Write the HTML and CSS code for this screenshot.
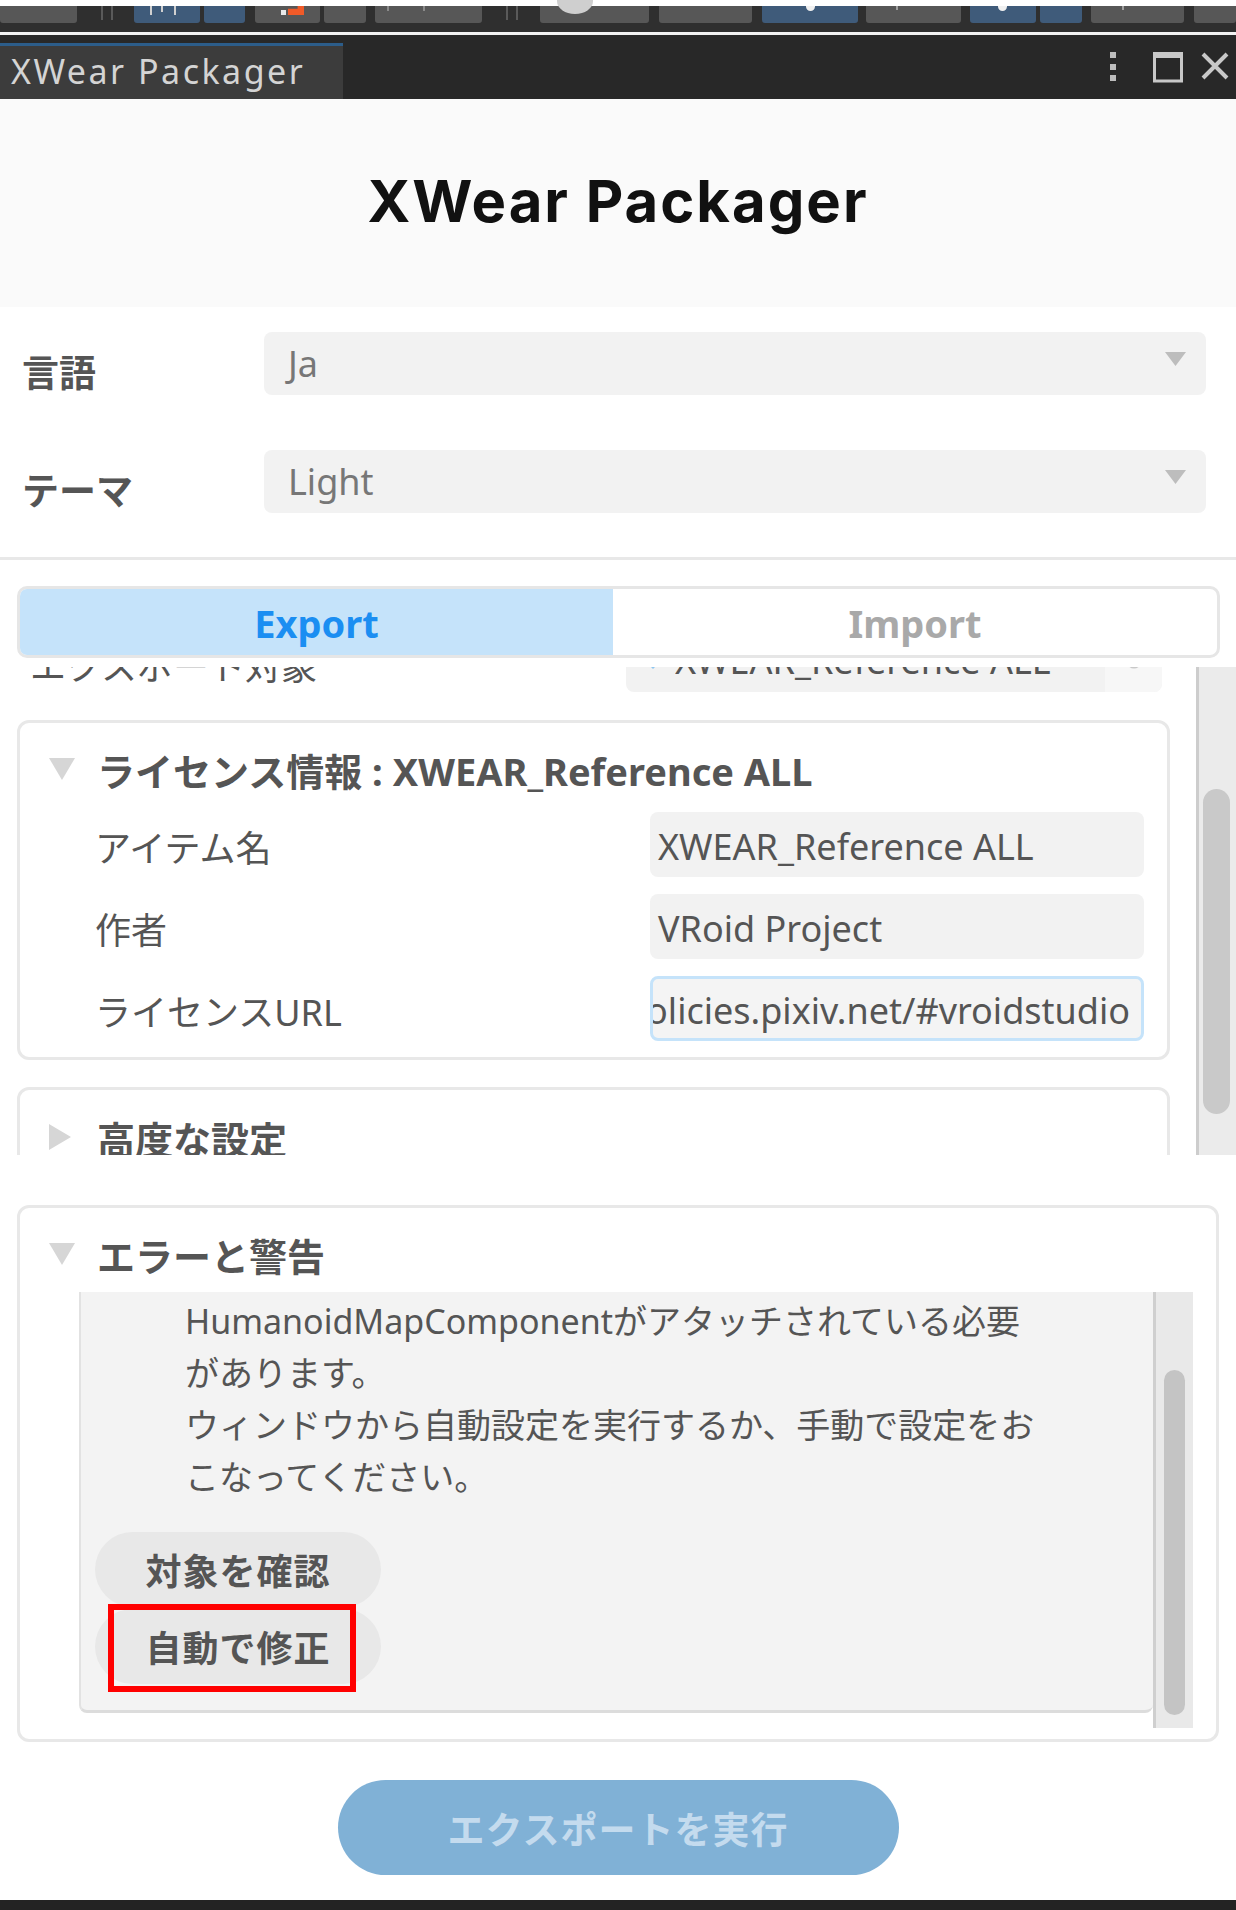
FILE: index.html
```html
<!DOCTYPE html>
<html lang="ja">
<head>
<meta charset="utf-8">
<title>XWear Packager</title>
<link rel="stylesheet" href="styles.css">
</head>
<body>
<div class="topwhite"></div>
<div class="toolbar">
  <div class="tb w77"></div>
  <div class="grip w57"><i></i><i></i></div>
  <div class="tb blue w66"><span class="mk mk-a"></span><span class="mk mk-b"></span><span class="mk mk-c"></span></div>
  <div class="gp w4"></div>
  <div class="tb blue w41"></div>
  <div class="gp w10"></div>
  <div class="tb w65"><span class="sq-white"></span><span class="sq-orange"></span></div>
  <div class="gp w4"></div>
  <div class="tb w42"></div>
  <div class="gp w9"></div>
  <div class="tb w107"><span class="mk mk-d"></span><span class="mk mk-e"></span></div>
  <div class="grip w58"><i></i><i></i></div>
  <div class="tb w109"><span class="half-circle"></span></div>
  <div class="gp w10"></div>
  <div class="tb w93"></div>
  <div class="gp w10"></div>
  <div class="tb blue w96"><span class="dot"></span></div>
  <div class="gp w8"></div>
  <div class="tb w95"><span class="mk mk-f"></span></div>
  <div class="gp w9"></div>
  <div class="tb blue w66"><span class="dot"></span></div>
  <div class="gp w4"></div>
  <div class="tb blue w42"></div>
  <div class="gp w9"></div>
  <div class="tb w93"><span class="mk mk-g"></span></div>
  <div class="gp w10"></div>
  <div class="tb w42"></div>
</div>
<div class="whiteline"></div>
<div class="tabbar">
  <div class="wtab">XWear Packager</div>
  <svg class="wicons" width="130" height="64" viewBox="0 0 130 64">
    <rect x="4" y="17" width="6" height="6" fill="#bdbdbd"/>
    <rect x="4" y="29" width="6" height="6" fill="#bdbdbd"/>
    <rect x="4" y="40" width="6" height="6" fill="#bdbdbd"/>
    <rect x="48.5" y="19" width="27" height="27" fill="none" stroke="#c8c8c8" stroke-width="3"/>
    <rect x="47" y="17" width="30" height="6" fill="#c8c8c8"/>
    <path d="M97 19 L121 43 M121 19 L97 43" stroke="#c8c8c8" stroke-width="4" fill="none"/>
  </svg>
</div>

<div class="header">
  <h1 class="apptitle">XWear Packager</h1>
</div>

<div class="settings">
  <div class="srow">
    <div class="slabel">言語</div>
    <div class="select"><span>Ja</span><svg width="21" height="14" viewBox="0 0 21 14"><polygon points="0,0 21,0 10.5,14" fill="#bdbdbd"/></svg></div>
  </div>
  <div class="srow">
    <div class="slabel">テーマ</div>
    <div class="select"><span>Light</span><svg width="21" height="14" viewBox="0 0 21 14"><polygon points="0,0 21,0 10.5,14" fill="#bdbdbd"/></svg></div>
  </div>
</div>

<div class="modetabs">
  <div class="mtab active">Export</div>
  <div class="mtab">Import</div>
</div>

<div class="scrollview">
  <div class="scontent">
    <div class="sinner">
      <div class="targetrow">
        <div class="tlabel">エクスポート対象</div>
        <div class="objfield">
          <svg class="objicon" width="16" height="16" viewBox="0 0 16 16"><polygon points="8,0 16,8 8,16 0,8" fill="#8ec6f0"/></svg>
          <span class="objtext">XWEAR_Reference ALL</span>
          <span class="picker"><svg width="18" height="18" viewBox="0 0 18 18"><circle cx="9" cy="9" r="6" fill="none" stroke="#c9c9c9" stroke-width="3"/></svg></span>
        </div>
      </div>

      <div class="box license">
        <div class="boxtitle">
          <svg class="tri" width="26" height="22" viewBox="0 0 26 22"><polygon points="0,0 26,0 13,22" fill="#d6d6d6"/></svg>
          <span>ライセンス情報 : XWEAR_Reference ALL</span>
        </div>
        <div class="frow">
          <div class="flabel">アイテム名</div>
          <div class="field"><span>XWEAR_Reference ALL</span></div>
        </div>
        <div class="frow">
          <div class="flabel">作者</div>
          <div class="field"><span>VRoid Project</span></div>
        </div>
        <div class="frow">
          <div class="flabel">ライセンスURL</div>
          <div class="field url"><span>https://policies.pixiv.net/#vroidstudio</span></div>
        </div>
      </div>

      <div class="box advanced">
        <div class="boxtitle">
          <svg class="tri" width="22" height="26" viewBox="0 0 22 26"><polygon points="0,0 22,13 0,26" fill="#d6d6d6"/></svg>
          <span>高度な設定</span>
        </div>
      </div>
    </div>
  </div>
  <div class="vscroll"><div class="thumb"></div></div>
</div>

<div class="errbox">
  <div class="boxtitle err">
    <svg class="tri" width="26" height="22" viewBox="0 0 26 22"><polygon points="0,0 26,0 13,22" fill="#d6d6d6"/></svg>
    <span>エラーと警告</span>
  </div>
  <div class="msgarea">
    <div class="msg">
      <div class="msgtext">HumanoidMapComponentがアタッチされている必要<br>があります。<br>ウィンドウから自動設定を実行するか、手動で設定をお<br>こなってください。</div>
      <div class="pills">
        <div class="pill">対象を確認</div>
        <div class="pill marked">自動で修正<span class="redmark"></span></div>
      </div>
    </div>
    <div class="msgscroll"><div class="mthumb"></div></div>
  </div>
</div>

<div class="exportbtn">エクスポートを実行</div>
<div class="bottombar"></div>
</body>
</html>
```

FILE: styles.css
```css
html, body {
  margin: 0;
  padding: 0;
}
body {
  width: 1236px;
  height: 1910px;
  overflow: hidden;
  background: #ffffff;
  font-family: "Noto Sans", "Noto Sans CJK JP", sans-serif;
  color: #555555;
}

/* ---------- editor toolbar ---------- */
.topwhite {
  height: 6px;
  background: #ffffff;
}
.toolbar {
  display: flex;
  height: 26px;
  background: #2f2f2f;
}
.tb, .grip, .gp {
  flex: none;
  height: 17px;
  position: relative;
}
.tb {
  background: #575757;
  border-radius: 0 0 3px 3px;
}
.tb.blue {
  background: #3f5b7a;
}
.grip i {
  position: absolute;
  top: 0;
  width: 2px;
  height: 14px;
  background: #5a5a5a;
}
.grip i:first-child { left: 24px; }
.grip i:last-child { left: 34px; }

.w4 { width: 4px; }
.w8 { width: 8px; }
.w9 { width: 9px; }
.w10 { width: 10px; }
.w41 { width: 41px; }
.w42 { width: 42px; }
.w57 { width: 57px; }
.w58 { width: 58px; }
.w65 { width: 65px; }
.w66 { width: 66px; }
.w77 { width: 77px; }
.w93 { width: 93px; }
.w95 { width: 95px; }
.w96 { width: 96px; }
.w107 { width: 107px; }
.w109 { width: 109px; }

.mk {
  position: absolute;
  top: 0;
  width: 2px;
  height: 9px;
  background: #d0d0d0;
}
.mk-a { left: 16px; }
.mk-b { left: 27px; height: 6px; }
.mk-c { left: 40px; }
.mk-d { left: 12px; height: 5px; background: #8a8a8a; }
.mk-e { left: 48px; height: 5px; background: #8a8a8a; }
.mk-f { left: 30px; height: 4px; background: #a0a0a0; }
.mk-g { left: 31px; height: 4px; background: #a0a0a0; }
.sq-white {
  position: absolute;
  left: 26px;
  top: 4px;
  width: 5px;
  height: 5px;
  background: #e8e8e8;
}
.sq-orange {
  position: absolute;
  left: 33px;
  top: 0;
  width: 16px;
  height: 9px;
  background: #f05a28;
  clip-path: polygon(60% 0, 100% 0, 100% 100%, 0 100%, 0 30%, 60% 30%);
}
.half-circle {
  position: absolute;
  left: 17px;
  top: -18px;
  width: 36px;
  height: 26px;
  border-radius: 50%;
  background: #cfcfcf;
}
.dot {
  position: absolute;
  left: 44px;
  top: 0;
  width: 9px;
  height: 5px;
  border-radius: 0 0 5px 5px;
  background: #f0f0f0;
}
.tb.blue.w66 .dot { left: 28px; }

.whiteline {
  height: 3px;
  background: #f2f2f2;
}

/* ---------- window tab bar ---------- */
.tabbar {
  display: flex;
  justify-content: space-between;
  height: 64px;
  background: #282828;
}
.wtab {
  margin-top: 8px;
  width: 343px;
  height: 56px;
  box-sizing: border-box;
  border-top: 3px solid #2c5d8a;
  background: #3c3c3c;
  color: #d4d4d4;
  font-family: "Noto Sans", "DejaVu Sans", sans-serif;
  font-size: 34px;
  line-height: 40px;
  letter-spacing: 2.5px;
  padding-left: 11px;
  padding-top: 5px;
  white-space: nowrap;
  overflow: hidden;
}
.wicons {
  flex: none;
}

/* ---------- header ---------- */
.header {
  height: 208px;
  background: #fafafa;
  display: flex;
  align-items: center;
  justify-content: center;
}
.apptitle {
  margin: 0;
  font-family: "Inter", "Lato", sans-serif;
  font-weight: 700;
  font-size: 58px;
  letter-spacing: 2px;
  color: #111111;
  line-height: 1;
  padding-bottom: 4px;
}

/* ---------- settings ---------- */
.settings {
  padding: 25px 30px 44px 22px;
  display: flex;
  flex-direction: column;
  gap: 55px;
  border-bottom: 3px solid #e8e8e8;
}
.srow {
  display: flex;
  align-items: center;
  height: 63px;
}
.slabel {
  width: 242px;
  flex: none;
  font-weight: 700;
  font-size: 37px;
  color: #555555;
  padding-top: 14px;
}
.select {
  flex: 1;
  height: 63px;
  box-sizing: border-box;
  background: #f2f2f2;
  border-radius: 8px;
  display: flex;
  align-items: center;
  justify-content: space-between;
  padding: 0 20px 0 24px;
  font-size: 36px;
  color: #777777;
}
.select svg {
  margin-top: -10px;
}

/* ---------- export / import tabs ---------- */
.modetabs {
  margin: 26px 16px 0 17px;
  height: 72px;
  box-sizing: border-box;
  border: 3px solid #e6e6e6;
  border-radius: 10px;
  display: grid;
  grid-template-columns: 593px 1fr;
  overflow: hidden;
}
.mtab {
  display: flex;
  align-items: center;
  justify-content: center;
  font-weight: 700;
  font-size: 38px;
  color: #a9a9a9;
  padding-top: 2px;
}
.mtab.active {
  background: #c5e3fa;
  color: #1b8ef2;
}

/* ---------- scroll view ---------- */
.scrollview {
  margin-top: 9px;
  height: 488px;
  display: flex;
  overflow: hidden;
}
.scontent {
  flex: 1;
  overflow: hidden;
}
.sinner {
  margin-top: -38px;
}
.targetrow {
  display: flex;
  align-items: center;
  justify-content: space-between;
  height: 63px;
  padding: 0 34px 0 30px;
}
.tlabel {
  font-size: 36px;
  color: #555555;
  padding-top: 8px;
  white-space: nowrap;
}
.objfield {
  width: 536px;
  height: 63px;
  box-sizing: border-box;
  background: #f2f2f2;
  border-radius: 8px;
  display: flex;
  align-items: center;
  padding-left: 19px;
  gap: 14px;
  font-size: 36px;
  color: #555555;
}
.objtext {
  flex: 1;
  white-space: nowrap;
  overflow: hidden;
}
.picker {
  width: 57px;
  height: 63px;
  flex: none;
  display: flex;
  align-items: center;
  justify-content: center;
  background: #f7f7f7;
  border-radius: 0 8px 8px 0;
}

.box {
  border: 3px solid #e8e8e8;
  border-radius: 12px;
  background: #ffffff;
  margin: 0 26px 0 17px;
}
.license {
  margin-top: 28px;
  padding-bottom: 16px;
}
.advanced {
  margin-top: 27px;
  height: 200px;
}
.boxtitle {
  display: flex;
  align-items: center;
  height: 50px;
  margin-top: 21px;
  padding-left: 29px;
  gap: 22px;
  font-weight: 700;
  font-size: 38px;
  color: #555555;
  white-space: nowrap;
}
.advanced .boxtitle {
  margin-top: 22px;
  gap: 26px;
}
.tri {
  flex: none;
}
.frow {
  display: flex;
  align-items: center;
  justify-content: space-between;
  height: 65px;
  padding: 0 23px 0 75px;
  margin-top: 17px;
}
.license .boxtitle + .frow {
  margin-top: 18px;
}
.flabel {
  font-size: 36px;
  color: #555555;
  padding-top: 4px;
  white-space: nowrap;
}
.field {
  width: 494px;
  height: 65px;
  box-sizing: border-box;
  background: #f2f2f2;
  border-radius: 8px;
  display: flex;
  align-items: center;
  padding: 3px 8px 0;
  font-size: 36px;
  color: #555555;
  overflow: hidden;
  white-space: nowrap;
}
.field.url {
  background: #f4f4f4;
  border: 3px solid #c5e3fa;
  justify-content: flex-end;
  padding: 3px 11px 0 0;
}
.field.url span {
  flex: none;
}

.vscroll {
  width: 40px;
  flex: none;
  box-sizing: border-box;
  border-left: 3px solid #cdcdcd;
  background: #ebebeb;
  padding-top: 122px;
}
.thumb {
  margin-left: 4px;
  width: 27px;
  height: 325px;
  border-radius: 14px;
  background: #c9c9c9;
}

/* ---------- errors ---------- */
.errbox {
  margin: 50px 17px 0 17px;
  border: 3px solid #e8e8e8;
  border-radius: 12px;
}
.boxtitle.err {
  margin-top: 21px;
}
.msgarea {
  display: flex;
  align-items: flex-start;
  margin: 13px 23px 11px 59px;
  height: 436px;
}
.msg {
  flex: 1;
  height: 421px;
  box-sizing: border-box;
  background: #f3f3f3;
  border-left: 2px solid #e2e2e2;
  border-bottom: 3px solid #dcdcdc;
  border-radius: 0 0 8px 8px;
  padding-top: 3px;
}
.msgtext {
  padding-left: 104px;
  font-size: 34px;
  line-height: 52px;
  color: #555555;
  white-space: nowrap;
}
.pills {
  margin: 29px 0 0 14px;
  display: flex;
  flex-direction: column;
  gap: 2px;
}
.pill {
  position: relative;
  width: 286px;
  height: 75px;
  border-radius: 38px;
  background: #e8e8e8;
  display: flex;
  align-items: center;
  justify-content: center;
  font-weight: 700;
  font-size: 36px;
  color: #555555;
  letter-spacing: 1px;
}
.redmark {
  position: absolute;
  left: 13px;
  top: -5px;
  width: 248px;
  height: 88px;
  box-sizing: border-box;
  border: 6px solid #ff0000;
}
.msgscroll {
  width: 40px;
  height: 436px;
  flex: none;
  box-sizing: border-box;
  border-left: 3px solid #cfcfcf;
  background: #e9e9e9;
  padding-top: 78px;
}
.mthumb {
  margin-left: 8px;
  width: 21px;
  height: 345px;
  border-radius: 11px;
  background: #c4c4c4;
}

/* ---------- export button ---------- */
.exportbtn {
  margin: 38px auto 0;
  width: 561px;
  height: 95px;
  border-radius: 48px;
  background: #80b1d6;
  color: #c4dbee;
  display: flex;
  align-items: center;
  justify-content: center;
  font-weight: 700;
  font-size: 37px;
  letter-spacing: 1px;
}
.bottombar {
  margin-top: 25px;
  height: 10px;
  background: #232323;
}
```
